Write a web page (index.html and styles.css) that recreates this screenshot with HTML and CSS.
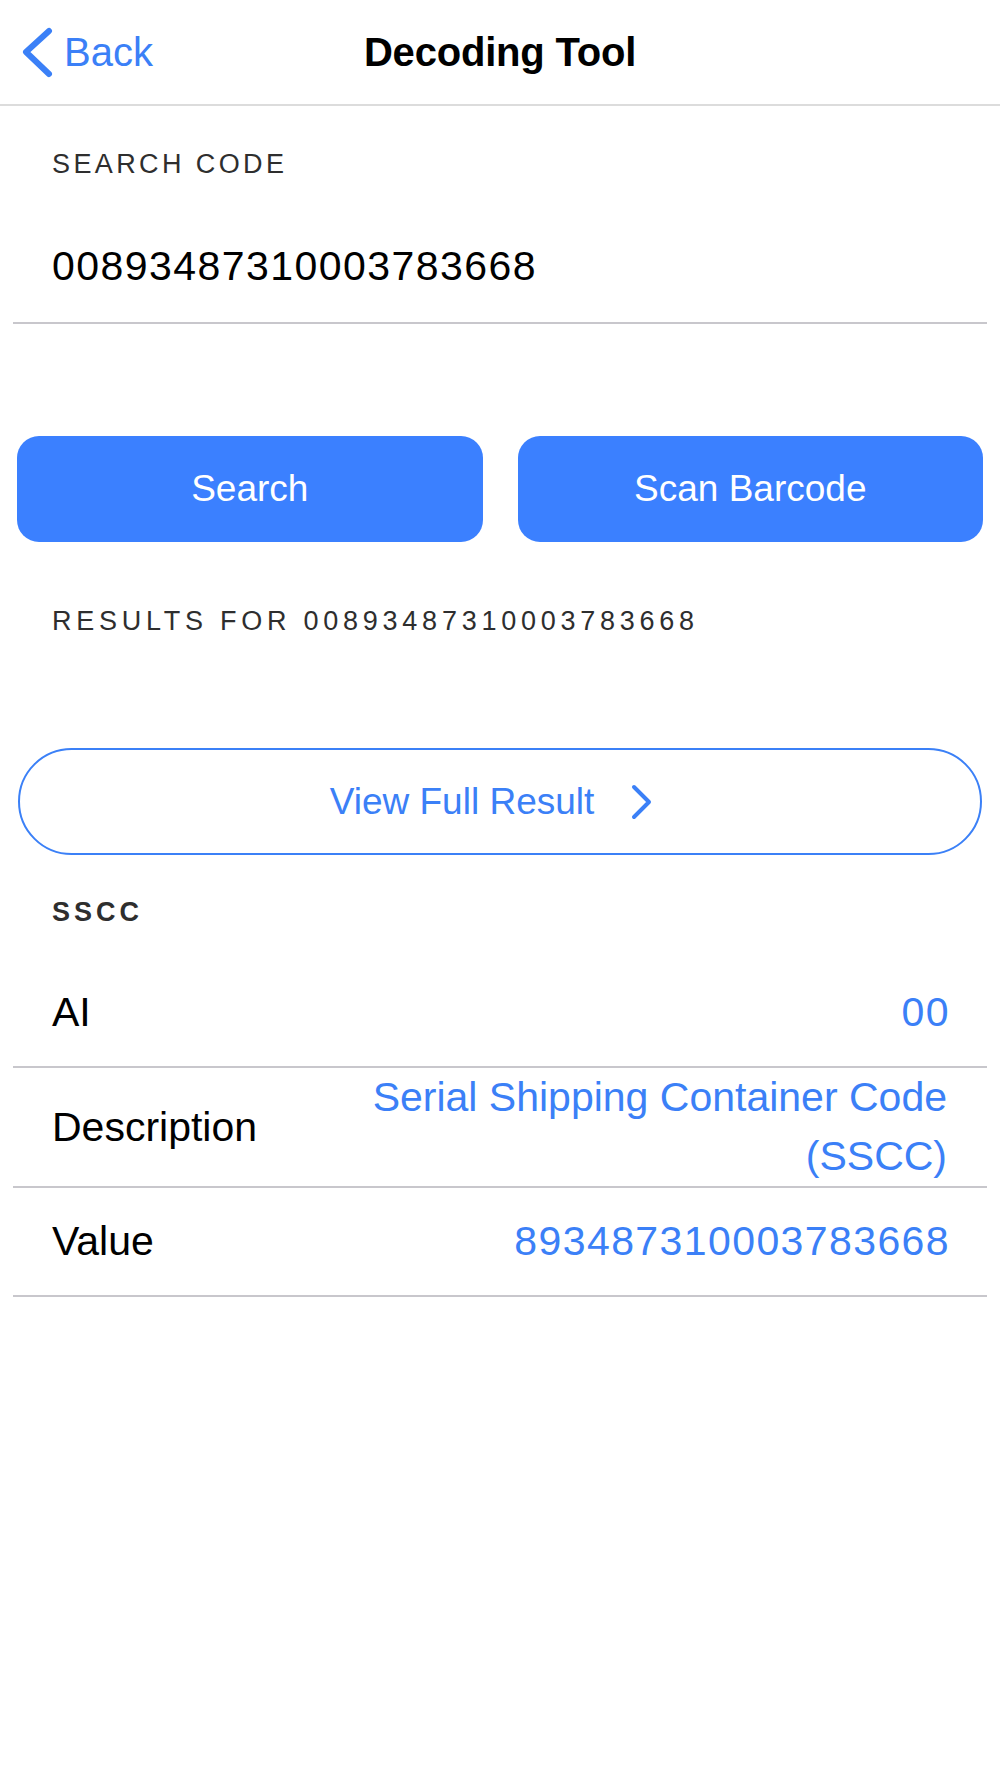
FILE: index.html
```html
<!DOCTYPE html>
<html lang="en">
<head>
    <meta charset="UTF-8">
    <title>Decoding Tool</title>
    <link rel="stylesheet" href="styles.css">
</head>
<body>
    <div class="navbar">
        <a class="back" href="#">
            <svg width="34" height="52" viewBox="0 0 34 52">
                <path d="M29 5 L6 26 L29 48" fill="none" stroke="#3b80f7" stroke-width="6" stroke-linecap="round" stroke-linejoin="round"/>
            </svg>
            <span>Back</span>
        </a>
        <h1>Decoding Tool</h1>
        <div></div>
    </div>

    <div class="field">
        <div class="label">SEARCH CODE</div>
        <div class="field-value">00893487310003783668</div>
    </div>

    <div class="actions">
        <button class="btn">Search</button>
        <button class="btn">Scan Barcode</button>
    </div>

    <div class="label label-results">RESULTS FOR 00893487310003783668</div>

    <button class="btn-outline">
        <span>View Full Result</span>
        <svg width="24" height="38" viewBox="0 0 24 38">
            <path d="M4 4 L19 19 L4 34" fill="none" stroke="#3b80f7" stroke-width="4" stroke-linecap="round" stroke-linejoin="round"/>
        </svg>
    </button>

    <div class="label label-group">SSCC</div>

    <div class="row">
        <div class="row-name">AI</div>
        <div class="row-value digits">00</div>
    </div>
    <div class="row">
        <div class="row-name">Description</div>
        <div class="row-value">Serial Shipping Container Code (SSCC)</div>
    </div>
    <div class="row">
        <div class="row-name">Value</div>
        <div class="row-value digits">893487310003783668</div>
    </div>
</body>
</html>
```

FILE: styles.css
```css
body {
    margin: 0;
    font-family: "Liberation Sans", Arial, sans-serif;
    background-color: #ffffff;
    color: #000000;
}
.navbar {
    display: grid;
    grid-template-columns: 1fr auto 1fr;
    align-items: center;
    height: 104px;
    border-bottom: 2px solid #dcdcdc;
}
.back {
    display: flex;
    align-items: center;
    gap: 10px;
    padding-left: 20px;
    color: #3b80f7;
    text-decoration: none;
    font-size: 40px;
    line-height: 46px;
}
.back svg {
    display: block;
}
h1 {
    margin: 0;
    font-size: 40px;
    font-weight: bold;
    line-height: 46px;
    letter-spacing: -0.2px;
}
.label {
    font-size: 27px;
    line-height: 32px;
    letter-spacing: 3.4px;
    color: #2e2e2e;
    padding-left: 52px;
}
.field {
    margin: 42px 13px 0;
    padding: 0 0 31px;
    border-bottom: 2px solid #c8c7cc;
}
.field .label {
    padding-left: 39px;
}
.field-value {
    margin-top: 61px;
    padding-left: 39px;
    font-size: 41px;
    line-height: 50px;
    letter-spacing: 1.45px;
}
.actions {
    display: flex;
    gap: 35px;
    margin: 112px 17px 0 17px;
}
.btn {
    flex: 1;
    height: 106px;
    border: none;
    border-radius: 22px;
    background: #3b80ff;
    color: #ffffff;
    font-family: inherit;
    font-size: 37px;
    cursor: pointer;
}
.label-results {
    margin-top: 63px;
    letter-spacing: 4.75px;
}
.btn-outline {
    display: flex;
    align-items: center;
    justify-content: center;
    width: 964px;
    height: 107px;
    margin: 111px 0 0 18px;
    border: 2px solid #3b80f7;
    border-radius: 54px;
    background: #ffffff;
    color: #3b80f7;
    font-family: inherit;
    font-size: 37px;
    cursor: pointer;
}
.btn-outline svg {
    display: block;
    margin: 0 16px 0 36px;
}
.label-group {
    margin-top: 41px;
    font-weight: bold;
    letter-spacing: 4px;
}
.label-group + .row {
    margin-top: 31px;
}
.row {
    display: flex;
    justify-content: space-between;
    align-items: center;
    min-height: 107px;
    margin: 0 13px;
    padding: 0 40px 0 39px;
    border-bottom: 2px solid #c8c7cc;
    font-size: 41px;
    line-height: 59px;
}
.row-value {
    max-width: 590px;
    text-align: right;
    color: #3b80f7;
}
.digits {
    letter-spacing: 1.4px;
    margin-right: -3px;
}
```
